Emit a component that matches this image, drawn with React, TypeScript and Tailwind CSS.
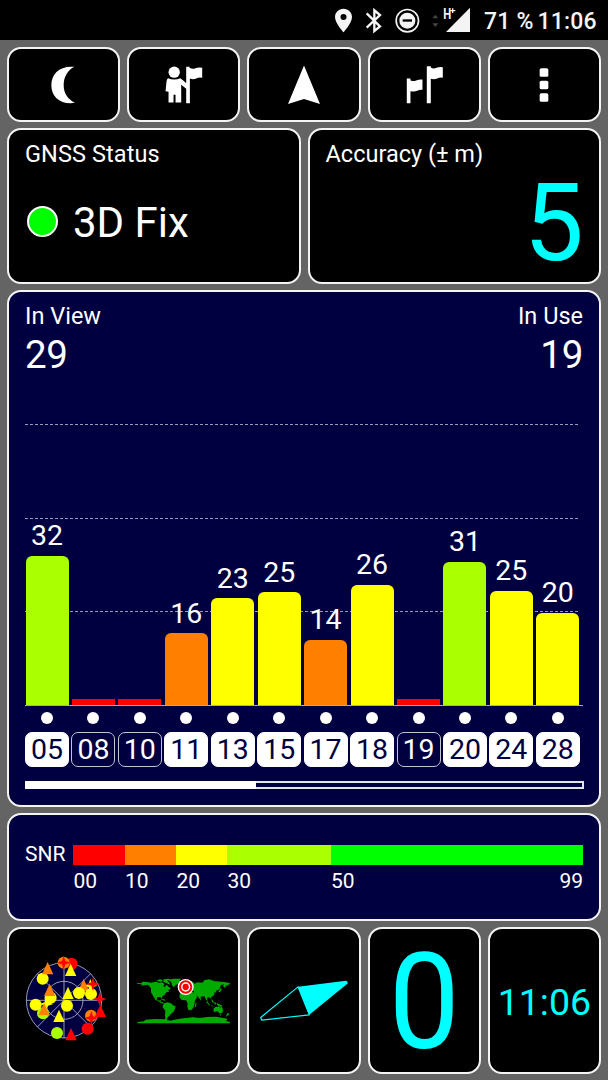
import type { ReactNode } from "react";

const CARD = "rounded-[14px] border-2 border-[#f4f4f4]";

const satellites = [
  { id: "05", snr: 32, height: 149.5, color: "bg-[#aaff00]", used: true },
  { id: "08", snr: null, height: 6.5, color: "bg-[#ff0000]", used: false },
  { id: "10", snr: null, height: 6.5, color: "bg-[#ff0000]", used: false },
  { id: "11", snr: 16, height: 72, color: "bg-[#ff8000]", used: true },
  { id: "13", snr: 23, height: 107, color: "bg-[#ffff00]", used: true },
  { id: "15", snr: 25, height: 113, color: "bg-[#ffff00]", used: true },
  { id: "17", snr: 14, height: 65.5, color: "bg-[#ff8000]", used: true },
  { id: "18", snr: 26, height: 120.5, color: "bg-[#ffff00]", used: true },
  { id: "19", snr: null, height: 6.5, color: "bg-[#ff0000]", used: false },
  { id: "20", snr: 31, height: 143.5, color: "bg-[#aaff00]", used: true },
  { id: "24", snr: 25, height: 114.5, color: "bg-[#ffff00]", used: true },
  { id: "28", snr: 20, height: 92.5, color: "bg-[#ffff00]", used: true },
];

function StatusBar() {
  return (
    <header className="flex h-10 items-start bg-black pl-[332px] text-[#f4f4f4]">
      <svg className="h-10 w-6 shrink-0" viewBox="36 0 72 120" fill="currentColor">
        <path fillRule="evenodd" d="M70.500 26C56 26 45 37 45 51c0 18 25.500 46 25.500 46S96 69 96 51c0-14-11-25-25.500-25Zm0 16a9 9 0 1 1 0 18a9 9 0 0 1 0-18Z" />
      </svg>
      <svg className="ml-1.5 h-10 w-6 shrink-0" viewBox="126 0 72 120" fill="none" stroke="currentColor" strokeWidth="7">
        <path d="M140 40L180 79L163 93V31L180 45L140 83" />
      </svg>
      <svg className="ml-2 h-10 w-[26px] shrink-0" viewBox="222 0 78 120">
        <circle cx="262" cy="62" r="33.500" fill="none" stroke="currentColor" strokeWidth="5" />
        <circle cx="262" cy="62" r="24" fill="currentColor" />
        <rect x="248" y="58" width="28" height="7" fill="#000" />
      </svg>
      <svg className="ml-2.5 h-10 w-[42px] shrink-0" viewBox="330 0 126 120" fill="currentColor">
        <path d="M337 55L346 44L355 55ZM337 70H355L346 81Z" fill="#444" />
        <path d="M450 23V96H378Z" />
        <text x="370" y="57" fontFamily="Roboto, sans-serif" fontWeight="700" fontSize="43" textLength="24" lengthAdjust="spacingAndGlyphs">H</text>
        <path d="M398 25V39M391 32H406" stroke="currentColor" strokeWidth="4" />
      </svg>
      <span className="ml-3 mt-[10px] w-[53.500px] whitespace-nowrap text-[23px] leading-[24px] font-medium tracking-[0.200px]">71 %</span>
      <span className="mt-[10px] whitespace-nowrap text-[23px] leading-[24px] font-medium tracking-[0.200px]">11:06</span>
    </header>
  );
}

function ToolButton({ viewBox, label, children }: { viewBox: string; label: string; children: ReactNode }) {
  return (
    <button aria-label={label} className={`${CARD} flex items-center justify-center bg-black text-white`}>
      <svg className="size-12" viewBox={viewBox} fill="currentColor">{children}</svg>
    </button>
  );
}

function Toolbar() {
  return (
    <nav className="grid h-[75px] grid-cols-5 gap-[7px]">
      <ToolButton label="Night mode" viewBox="119 73.500 144 144">
        <path d="M222 91C178 87 153 112 153 146C153 181 180 205 224 199C203 188 190 171 190 146C190 121 203 100 222 91Z" />
      </ToolButton>
      <ToolButton label="Locate" viewBox="479.400 73.500 144 144">
        <circle cx="522" cy="107" r="17" />
        <path d="M504 125Q511 129 522 129Q533 129 540 125L550 133L558 140V91H568V94Q577 99 586 95T606 94V124Q597 121 588 126T569 126V200H558V157L543 145V198H526V175H520V198H505V166L496 164L499 134Q500 126 504 125Z" />
      </ToolButton>
      <ToolButton label="Navigate" viewBox="280 60.500 48 48">
        <path d="M304 65L320 103.500L304 98.500L288 103.500Z" />
      </ToolButton>
      <ToolButton label="Waypoints" viewBox="240.600 181.500 144 144">
        <path d="M261 234H272V239Q280 244 289 240T308 237V268Q300 267 292 271T272 272V308H261Z" />
        <path d="M321 197H333V201Q341 206 350 202T369 200V232Q361 230 352 234T333 235V308H321Z" />
      </ToolButton>
      <ToolButton label="Menu" viewBox="601 181.500 144 144">
        <rect x="660" y="203" width="26" height="26" rx="5" />
        <rect x="660" y="240.500" width="26" height="26" rx="5" />
        <rect x="660" y="278" width="26" height="26" rx="5" />
      </ToolButton>
    </nav>
  );
}

function FixRow() {
  return (
    <section className="grid h-[156px] grid-cols-2 gap-[7px]">
      <div className={`${CARD} bg-black px-4 pt-[11px]`}>
        <h2 className="text-[23.500px] leading-[26px] tracking-[0.100px]">GNSS Status</h2>
        <div className="mt-[32px] flex items-center pl-[2px]">
          <span className="mb-[3px] size-[31px] rounded-full border-2 border-white bg-[#00ff00]" />
          <span className="ml-[15px] text-[42px] leading-[48px]">3D Fix</span>
        </div>
      </div>
      <div className={`${CARD} flex flex-col bg-black pl-4 pr-[15px] pt-[11px]`}>
        <h2 className="text-[23.500px] leading-[26px]">Accuracy (± m)</h2>
        <div className="mt-[3px] text-right text-[107px] leading-[108px] text-[#00ffff]">5</div>
      </div>
    </section>
  );
}

function DashedLine() {
  return (
    <svg className="block h-px w-[555px]" viewBox="0 0 555 1">
      <path d="M0 0.500H555" stroke="#9a9ab4" strokeDasharray="3 2" />
    </svg>
  );
}

function SignalChart() {
  return (
    <section className={`${CARD} h-[517px] bg-[#000040] pl-[16px] pr-[15px] pt-[11px]`}>
      <div className="flex justify-between pr-px">
        <div>
          <div className="text-[23.500px] leading-[26px]">In View</div>
          <div className="mt-[4px] text-[38.500px] leading-[44px] tracking-[-0.300px]">29</div>
        </div>
        <div className="text-right">
          <div className="text-[23.500px] leading-[26px]">In Use</div>
          <div className="mt-[4px] text-[38.500px] leading-[44px] tracking-[-0.300px]">19</div>
        </div>
      </div>

      <div className="relative mt-[47px] h-[282px] w-[558px] border-b border-[#a8a8b4]">
        <div className="absolute inset-x-0 top-0 flex flex-col gap-[92.500px]">
          <DashedLine />
          <DashedLine />
          <DashedLine />
        </div>
        <div className="relative flex h-full items-end gap-[3.440px] pl-[0.500px]">
          {satellites.map((s) => (
            <div key={s.id} className="flex w-[43px] shrink-0 flex-col items-center">
              {s.snr !== null && <span className="mb-[2.500px] text-[28.500px] leading-[34px]">{s.snr}</span>}
              <div className={`w-full ${s.color} ${s.snr !== null ? "rounded-t-[6px]" : ""}`} style={{ height: s.height }} />
            </div>
          ))}
        </div>
      </div>

      <div className="mt-[6px] flex gap-[2.440px]">
        {satellites.map((s) => (
          <div key={s.id} className="flex w-11 shrink-0 flex-col items-center">
            <span className="size-3 rounded-full bg-white" />
            <span
              className={`mt-2 flex h-[34.500px] w-full items-center justify-center rounded-[7px] border pt-px text-[28.500px] leading-none ${
                s.used ? "border-white bg-white text-[#000040]" : "border-[#c4c4d0] text-white"
              }`}
            >
              {s.id}
            </span>
          </div>
        ))}
      </div>

      <div className="mt-[14.500px] flex h-2 w-[559px]">
        <div className="w-[231px] bg-white" />
        <div className="flex-1 border-2 border-l-0 border-[#e4e4ec]" />
      </div>
    </section>
  );
}

const scale = [
  { label: "00", width: "w-[51.500px]", color: "bg-[#ff0000]" },
  { label: "10", width: "w-[51.500px]", color: "bg-[#ff8000]" },
  { label: "20", width: "w-[51px]", color: "bg-[#ffff00]" },
  { label: "30", width: "w-[103.500px]", color: "bg-[#aaff00]" },
  { label: "50", width: "w-[252.500px]", color: "bg-[#00ff00]" },
];

function SnrLegend() {
  return (
    <section className={`${CARD} flex h-[108px] bg-[#000040] pl-4 pt-[30px] text-[21px] leading-[25px]`}>
      <div className="-mt-[3px] w-[48px]">SNR</div>
      <div className="flex">
        {scale.map((s) => (
          <div key={s.label} className={s.width}>
            <div className={`h-[19.500px] ${s.color}`} />
            <div className="mt-[4.500px] flex justify-between pl-[0.500px]">
              <span>{s.label}</span>
              {s.label === "50" && <span>99</span>}
            </div>
          </div>
        ))}
      </div>
    </section>
  );
}

const STAR = "M0 -21L5 -5L21 0L5 5L0 21L-5 5L-21 0L-5 -5Z";
const TRI = "M0 -19L17 18H-17Z";

function Dot({ x, y, c }: { x: number; y: number; c: string }) {
  return <circle cx={x} cy={y} r="18" fill={c} />;
}
function Mark({ x, y, c, d }: { x: number; y: number; c: string; d: string }) {
  return <path d={d} fill={c} transform={`translate(${x} ${y})`} />;
}

function SkyPlot() {
  const Y = "#ffff00";
  const O = "#ff8000";
  const R = "#ff0000";
  const G = "#aaff00";
  return (
    <svg className="size-[90px]" viewBox="-4 3 270 270">
      <g stroke="#b4b4c8" strokeWidth="2.500" fill="none">
        <circle cx="131" cy="136" r="113" fill="#000040" />
        <circle cx="131" cy="136" r="57" />
        <path d="M18 136H244M131 23V249M51 216L211 56M51 56L211 216" />
      </g>
      <Dot x={154} y={26} c={R} />
      <Dot x={130} y={23} c={O} />
      <Mark x={130} y={23} c={R} d={STAR} />
      <Dot x={67} y={71} c={Y} />
      <Mark x={82} y={40} c={O} d={TRI} />
      <Mark x={151} y={45} c={Y} d={TRI} />
      <Mark x={210} y={92} c={Y} d={STAR} />
      <Mark x={190} y={91} c={O} d={TRI} />
      <Dot x={176} y={114} c={Y} />
      <Dot x={212} y={117} c={Y} />
      <Mark x={218} y={87} c={R} d={STAR} />
      <Mark x={238} y={132} c={R} d={STAR} />
      <Dot x={68} y={175} c={G} />
      <Mark x={78} y={147} c={Y} d={STAR} />
      <Dot x={46} y={149} c={Y} />
      <Dot x={91} y={128} c={Y} />
      <Mark x={88} y={105} c={O} d={TRI} />
      <Mark x={71} y={163} c={O} d={TRI} />
      <Mark x={143} y={114} c={Y} d={TRI} />
      <Dot x={140} y={152} c={Y} />
      <Mark x={116} y={183} c={Y} d={TRI} />
      <Dot x={212} y={182} c={O} />
      <Mark x={213} y={189} c={R} d={STAR} />
      <Mark x={240} y={168} c={R} d={TRI} />
      <Dot x={202} y={221} c={R} />
      <Dot x={110} y={234} c={G} />
      <Mark x={152} y={238} c={R} d={TRI} />
    </svg>
  );
}

function WorldMap() {
  return (
    <svg className="h-[54px] w-[100px]" viewBox="0 0 300 162">
      <g fill="#00aa00">
        <path d="M10 27L22 28L25 23L40 24L52 26L66 23L77 27L82 24L92 30L88 35L91 40L97 32L105 39L111 44L102 48L106 53L97 55L92 62L85 67L84 75L79 69L70 69L68 77L75 80L80 77L80 83L87 85L91 90L83 88L73 82L64 77L58 67L51 55L51 43L42 32L31 34L20 35L24 31L10 30Z" />
        <path d="M66 20L78 16L87 18L82 23L74 22ZM88 16L104 14L111 18L100 20L107 26L108 32L98 28L88 23Z" />
        <path d="M103 17L119 14L140 14L137 22L134 29L125 33L119 40L114 34L112 25Z" />
        <path d="M79 75L91 76L95 80L87 79Z" />
        <path d="M91 88L100 85L111 88L117 94L125 97L123 104L119 113L111 119L106 126L101 130L99 137L103 140L95 138L93 124L94 110L86 100L86 95Z" />
        <path d="M139 52L146 48L156 50L169 51L176 54L182 63L190 69L183 79L181 91L180 97L174 107L164 109L160 98L161 88L156 79L143 78L136 69Z" />
        <path d="M184 88L188 86L186 97L182 101Z" />
        <path d="M137 48L139 39L149 32L151 25L165 20L179 25L181 29L190 25L205 26L211 19L225 16L242 22L262 23L276 25L289 28L284 33L276 35L273 42L267 37L270 31L260 34L258 42L253 48L246 50L247 57L242 54L240 64L233 68L228 75L226 69L219 71L221 82L216 77L211 67L200 68L201 80L191 67L183 66L177 58L180 51L173 49L166 50L164 45L156 40L150 45L145 48Z" />
        <path d="M138 35L143 31L141 39ZM259 43L264 45L258 55L253 54ZM232 74L238 81L239 89L234 83ZM219 81L229 94L226 94L217 85ZM229 94L242 97L234 97ZM240 83L248 88L243 93ZM249 88L266 95L259 98L249 93Z" />
        <path d="M239 103L246 98L251 99L253 95L259 101L263 96L267 107L265 117L256 118L250 111L239 115Z" />
        <path d="M257 120L262 121L259 125ZM281 116L287 120L280 125L275 129L278 122Z" />
        <path d="M10 147L10 144L30 142L35 137L60 135L92 136L99 132L98 138L109 140L128 136L149 133L177 130L197 132L219 129L247 128L264 131L280 134L277 141L288 144V148H10Z" />
      </g>
      <circle cx="155" cy="39" r="24" fill="#fff" />
      <circle cx="155" cy="39" r="17" fill="none" stroke="#ff0000" strokeWidth="6" />
      <circle cx="155" cy="39" r="9.500" fill="#ff0000" />
    </svg>
  );
}

function Compass() {
  return (
    <svg className="h-[50px] w-[110px] shrink-0" viewBox="27 166.500 330 150">
      <path d="M174 199L318 181Q325 183 323 189L208 283Z" fill="#00ffff" />
      <path d="M174 199L62 291L65 299L208 283Z" fill="none" stroke="#00ffff" strokeWidth="3.500" strokeLinejoin="round" />
    </svg>
  );
}

function Tiles() {
  const tile = `${CARD} flex items-center justify-center bg-black text-[#00ffff]`;
  return (
    <section className="grid h-[147px] grid-cols-5 gap-[7px]">
      <div className={tile}><SkyPlot /></div>
      <div className={tile}><WorldMap /></div>
      <div className={tile}><Compass /></div>
      <div className={tile}><span className="mt-[4px] scale-x-[0.950] text-[133px] leading-[134px]">0</span></div>
      <div className={tile}><span className="mt-[3px] text-[37.500px] leading-[44px]">11:06</span></div>
    </section>
  );
}

export default function App() {
  return (
    <div className="h-[1080px] w-[608px] overflow-hidden bg-[#646464] font-[Roboto,sans-serif] text-white">
      <StatusBar />
      <main className="flex flex-col gap-1.5 px-[7px] pt-[7px]">
        <Toolbar />
        <FixRow />
        <SignalChart />
        <SnrLegend />
        <Tiles />
      </main>
    </div>
  );
}
